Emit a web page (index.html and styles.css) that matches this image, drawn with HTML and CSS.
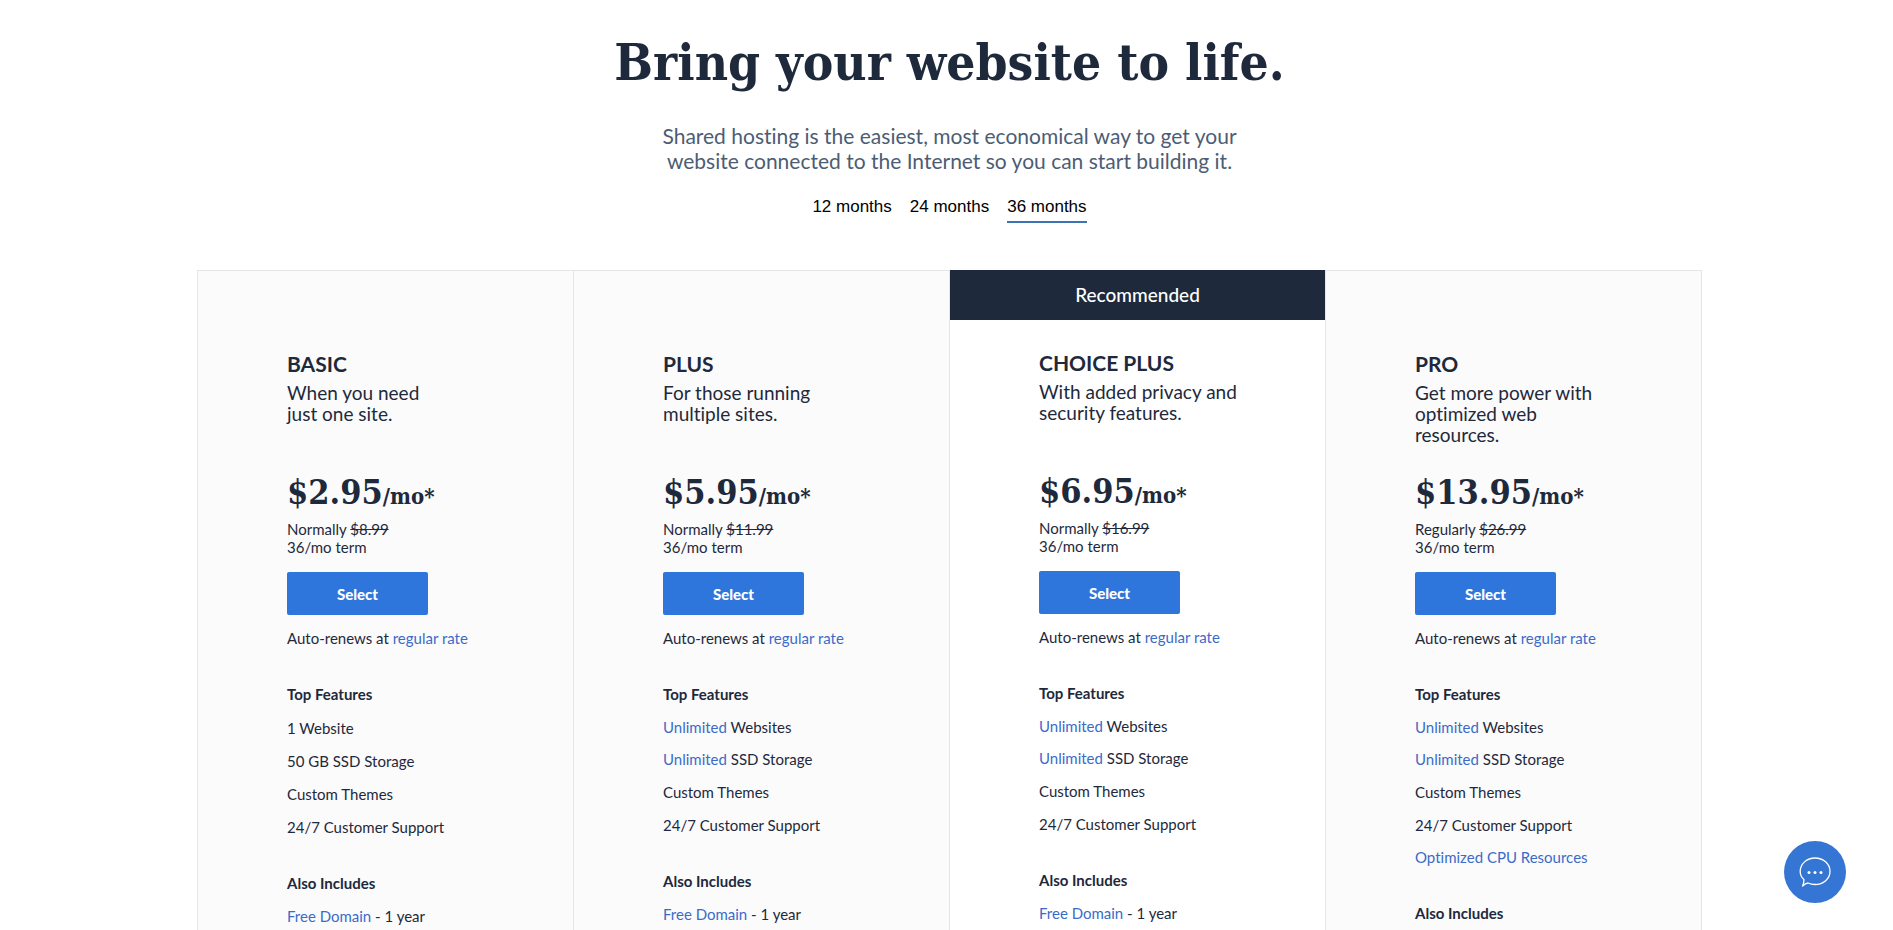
FILE: index.html
```
<!DOCTYPE html>
<html lang="en">
<head>
<meta charset="UTF-8">
<meta name="viewport" content="width=device-width,initial-scale=1">
<title>Shared Hosting Plans</title>
<link rel="stylesheet" href="styles.css">
</head>
<body>
<header class="intro">
  <h1>Bring your website to life.</h1>
  <p class="lead">Shared hosting is the easiest, most economical way to get your website connected to the Internet so you can start building it.</p>
  <div class="terms">
    <button type="button">12 months</button>
    <button type="button">24 months</button>
    <button type="button" class="active">36 months</button>
  </div>
</header>

<main class="plans">
  <section class="plan">
    <div class="plan-body">
      <h2>BASIC</h2>
      <p class="desc">When you need just&nbsp;one&nbsp;site.</p>
      <p class="price">$2.95<span>/mo*</span></p>
      <p>Normally <s>$8.99</s></p>
      <p>36/mo term</p>
      <button type="button" class="select">Select</button>
      <p>Auto-renews at <a href="#">regular rate</a></p>
      <h3>Top Features</h3>
      <ul>
        <li>1 Website</li>
        <li>50 GB SSD Storage</li>
        <li>Custom Themes</li>
        <li>24/7 Customer Support</li>
      </ul>
      <h3>Also Includes</h3>
      <ul>
        <li class="more"><a href="#">Free Domain</a> - 1 year</li>
      </ul>
    </div>
  </section>

  <section class="plan">
    <div class="plan-body">
      <h2>PLUS</h2>
      <p class="desc">For those running multiple sites.</p>
      <p class="price">$5.95<span>/mo*</span></p>
      <p>Normally <s>$11.99</s></p>
      <p>36/mo term</p>
      <button type="button" class="select">Select</button>
      <p>Auto-renews at <a href="#">regular rate</a></p>
      <h3>Top Features</h3>
      <ul>
        <li class="more"><a href="#">Unlimited</a> Websites</li>
        <li class="more"><a href="#">Unlimited</a> SSD Storage</li>
        <li>Custom Themes</li>
        <li>24/7 Customer Support</li>
      </ul>
      <h3>Also Includes</h3>
      <ul>
        <li class="more"><a href="#">Free Domain</a> - 1 year</li>
      </ul>
    </div>
  </section>

  <section class="plan recommended">
    <div class="flag">Recommended</div>
    <div class="plan-body">
      <h2>CHOICE PLUS</h2>
      <p class="desc">With added privacy and security features.</p>
      <p class="price">$6.95<span>/mo*</span></p>
      <p>Normally <s>$16.99</s></p>
      <p>36/mo term</p>
      <button type="button" class="select">Select</button>
      <p>Auto-renews at <a href="#">regular rate</a></p>
      <h3>Top Features</h3>
      <ul>
        <li class="more"><a href="#">Unlimited</a> Websites</li>
        <li class="more"><a href="#">Unlimited</a> SSD Storage</li>
        <li>Custom Themes</li>
        <li>24/7 Customer Support</li>
      </ul>
      <h3>Also Includes</h3>
      <ul>
        <li class="more"><a href="#">Free Domain</a> - 1 year</li>
      </ul>
    </div>
  </section>

  <section class="plan">
    <div class="plan-body">
      <h2>PRO</h2>
      <p class="desc">Get more power with optimized web resources.</p>
      <p class="price">$13.95<span>/mo*</span></p>
      <p>Regularly <s>$26.99</s></p>
      <p>36/mo term</p>
      <button type="button" class="select">Select</button>
      <p>Auto-renews at <a href="#">regular rate</a></p>
      <h3>Top Features</h3>
      <ul>
        <li class="more"><a href="#">Unlimited</a> Websites</li>
        <li class="more"><a href="#">Unlimited</a> SSD Storage</li>
        <li>Custom Themes</li>
        <li>24/7 Customer Support</li>
        <li class="more"><a href="#">Optimized CPU Resources</a></li>
      </ul>
      <h3>Also Includes</h3>
    </div>
  </section>
</main>

<button type="button" class="chat" aria-label="Chat">
  <svg viewBox="0 0 62 62" width="62" height="62">
    <path d="M20 38.500C17.500 36.500 16.200 33.700 16.200 30.500C16.200 22.800 22.800 17 31 17S46 22.800 46 30.300S39.500 43.500 31 43.500C28.200 43.500 26 42.900 24 42C22.500 42.200 20.500 43.200 18.600 45C19.600 42.500 20 40.500 20 38.500Z" fill="none" stroke="#fff" stroke-width="1.300" stroke-linecap="round" stroke-linejoin="round"/>
    <g fill="#fff"><circle cx="25" cy="31.500" r="1.500"/><circle cx="31" cy="31.500" r="1.500"/><circle cx="37" cy="31.500" r="1.500"/></g>
  </svg>
</button>
</body>
</html>
```
FILE: styles.css
```
:root{--navy:#1e293b;--blue:#2e76dc;--link:#3b6bc9;--line:#e5e6e7;--card:#fbfbfb;
      --sans:Lato,"Liberation Sans",sans-serif;--serif:"DejaVu Serif Condensed","DejaVu Serif","Liberation Serif",serif}
*{box-sizing:border-box;margin:0;padding:0}
body{background:#fff;color:var(--navy);font:15px/18px var(--sans);font-variant-ligatures:none;padding:30px 0 0 6px}
button{font:inherit;border:0;background:none;cursor:pointer}
a{color:var(--link);text-decoration:none}
a:hover{text-decoration:underline}
ul{list-style:none}

/* intro */
.intro{display:flex;flex-direction:column;align-items:center;text-align:center}
h1{font:700 51px/64px var(--serif)}
.lead{max-width:600px;margin-top:29px;font-size:21px;line-height:25px;color:#4c5d73}
.terms{display:flex;gap:18px;margin:24px 0 47px}
.terms button{font:17px/20px "Liberation Sans",sans-serif;color:#000;padding-bottom:4px;border-bottom:2px solid transparent}
.terms .active{border-color:#3b73b5}

/* plans */
.plans{display:grid;grid-template-columns:repeat(4,1fr);max-width:1505px;margin:0 auto;border-right:1px solid var(--line)}
.plan{background:var(--card);border:solid var(--line);border-width:1px 0 0 1px;padding-top:50px}
.plan-body{padding:31px 60px 40px 89px}
.recommended{background:#fff;border-top:0;padding-top:0}
.flag{background:var(--navy);color:#fff;font-size:19px;line-height:50px;font-weight:500;text-align:center}
h2{font-size:21px;line-height:24px}
.desc{max-width:200px;min-height:63px;margin-top:6px;font-size:19px;line-height:21px}
.price{margin:25px 0 6px;font:700 34px/44px var(--serif)}
.price span{font-size:22px;line-height:22px}
.select{display:block;width:141px;height:43px;margin:16px 0 14px;background:var(--blue);color:#fff;font-weight:900;border-radius:2px}
h3{font-size:15px;line-height:18px;margin:38px 0 1px}
li{padding-top:15px}
li.more{padding-top:14px}

/* chat */
.chat{position:fixed;right:47px;bottom:27px;width:62px;height:62px;border-radius:50%;background:#3575d3}
.chat svg{display:block}
```
